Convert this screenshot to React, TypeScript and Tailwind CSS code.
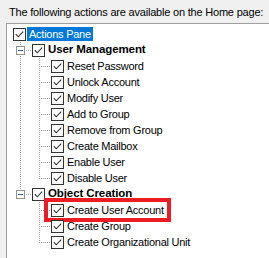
import React from "react";

type Item = {
  label: string;
  level: number;
  bold?: boolean;
  selected?: boolean;
  expander?: boolean;
  last?: boolean;
  parentLast?: boolean;
  marked?: boolean;
};

const items: Item[] = [
  { label: "Actions Pane", level: 0, selected: true },
  { label: "User Management", level: 1, bold: true, expander: true },
  { label: "Reset Password", level: 2 },
  { label: "Unlock Account", level: 2 },
  { label: "Modify User", level: 2 },
  { label: "Add to Group", level: 2 },
  { label: "Remove from Group", level: 2 },
  { label: "Create Mailbox", level: 2 },
  { label: "Enable User", level: 2 },
  { label: "Disable User", level: 2, last: true },
  { label: "Object Creation", level: 1, bold: true, expander: true, last: true },
  { label: "Create User Account", level: 2, parentLast: true, marked: true },
  { label: "Create Group", level: 2, parentLast: true },
  { label: "Create Organizational Unit", level: 2, parentLast: true, last: true },
];

const LINE = "#a0a0a0";

function CheckBox() {
  return (
    <div className="w-[13px] h-[13px] shrink-0 border border-[#333333] bg-white flex">
      <svg width="11" height="11" viewBox="0 0 11 11">
        <path d="M1.8 5.2 L4.2 7.8 L9.2 2.6" fill="none" stroke="#333333" strokeWidth="1.1" />
      </svg>
    </div>
  );
}

function Gutter({
  vertical,
  half,
  horizontal,
  expander,
}: {
  vertical?: boolean;
  half?: boolean;
  horizontal?: "short" | "long";
  expander?: boolean;
}) {
  return (
    <svg width="19" height="16" viewBox="0 0 19 16" className="shrink-0" shapeRendering="crispEdges">
      {vertical && <line x1="7.5" y1="0" x2="7.5" y2="16" stroke={LINE} strokeDasharray="1 1" />}
      {half && <line x1="7.5" y1="0" x2="7.5" y2="9" stroke={LINE} strokeDasharray="1 1" />}
      {horizontal === "long" && (
        <line x1="9" y1="8.5" x2="19" y2="8.5" stroke={LINE} strokeDasharray="1 1" />
      )}
      {horizontal === "short" && (
        <line x1="13" y1="8.5" x2="19" y2="8.5" stroke={LINE} strokeDasharray="1 1" />
      )}
      {expander && (
        <g>
          <rect x="3.5" y="4.5" width="8" height="8" fill="#ffffff" stroke="#919191" />
          <line x1="5" y1="8.5" x2="10" y2="8.5" stroke="#3a5f9a" />
        </g>
      )}
    </svg>
  );
}

function Row({ item }: { item: Item }) {
  return (
    <div className="relative flex items-center h-[16px] pl-[6px]">
      {item.level === 1 && (
        <Gutter vertical={!item.last} half={item.last} horizontal="short" expander={item.expander} />
      )}
      {item.level === 2 && <Gutter vertical={!item.parentLast} />}
      {item.level === 2 && <Gutter vertical={!item.last} half={item.last} horizontal="long" />}
      <CheckBox />
      <div
        className={
          "ml-[1px] px-[2px] h-[14px] flex items-center whitespace-nowrap " +
          (item.selected ? "bg-[#0078d7] text-white " : "text-black ") +
          (item.bold ? "font-bold text-[11.5px] tracking-[-0.1px]" : "text-[11px] tracking-[-0.25px]")
        }
      >
        {item.label}
      </div>
      {item.marked && (
        <div className="absolute left-[37px] top-[-4px] w-[127px] h-[24px] border-[4px] border-[#ec1c24] pointer-events-none" />
      )}
    </div>
  );
}

export default function App() {
  return (
    <div className="w-[269px] h-[258px] bg-[#f0f0f0] flex flex-col overflow-hidden font-['Liberation_Sans',Arial,sans-serif]">
      <div className="h-[23px] shrink-0 pl-[9px] pt-[5px] text-[11px] leading-[14px] tracking-[-0.2px] text-black whitespace-nowrap">
        The following actions are available on the Home page:
      </div>
      <div className="flex-1 ml-[6px] border-l border-t border-[#a0a0a0] bg-white pt-[2px] flex flex-col">
        {items.map((it) => (
          <Row key={it.label} item={it} />
        ))}
      </div>
    </div>
  );
}
